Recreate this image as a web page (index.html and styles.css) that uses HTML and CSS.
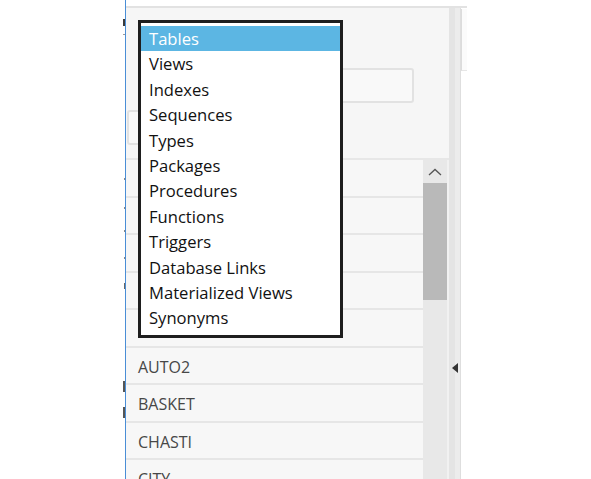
FILE: index.html
```html
<!DOCTYPE html>
<html>
<head>
<meta charset="utf-8">
<link rel="stylesheet" href="styles.css">
</head>
<body>
<div class="screen">
  <div class="gutter">
    <span class="tick t1"></span>
    <span class="tick t2"></span>
    <span class="tick t3"></span>
    <span class="tick t4"></span>
    <span class="tick t5"></span>
    <span class="tick t6"></span>
    <span class="tick t7"></span>
    <span class="tick t8"></span>
    <span class="tick t9"></span>
  </div>
  <div class="blueline"></div>
  <div class="main">
    <div class="topwhite"></div>
    <div class="body">
      <div class="panel">
        <div class="header">
          <div class="search"></div>
          <div class="btnbox"></div>
        </div>
        <div class="listarea">
          <div class="rows">
            <div class="row"></div>
            <div class="row"></div>
            <div class="row"></div>
            <div class="row"></div>
            <div class="row"></div>
            <div class="row">AUTO2</div>
            <div class="row">BASKET</div>
            <div class="row">CHASTI</div>
            <div class="row">CITY</div>
          </div>
          <div class="scrollbar">
            <div class="arrow">
              <svg width="14" height="8" viewBox="0 0 14 8"><path d="M1 7 L7 1.5 L13 7" fill="none" stroke="#555" stroke-width="1.3"/></svg>
            </div>
            <div class="thumb"></div>
          </div>
          <div class="edge"></div>
        </div>
        <ul class="dropdown">
          <li class="sel">Tables</li>
          <li>Views</li>
          <li>Indexes</li>
          <li>Sequences</li>
          <li>Types</li>
          <li>Packages</li>
          <li>Procedures</li>
          <li>Functions</li>
          <li>Triggers</li>
          <li>Database Links</li>
          <li>Materialized Views</li>
          <li>Synonyms</li>
        </ul>
      </div>
      <div class="strip">
        <span class="collapse"></span>
      </div>
      <div class="side">
        <div class="sidebox"></div>
      </div>
    </div>
  </div>
</div>
</body>
</html>
```
FILE: styles.css
```css
html, body {
  margin: 0;
  padding: 0;
  background: #ffffff;
}
body {
  width: 591px;
  height: 479px;
  overflow: hidden;
  font-family: "Open Sans", "Noto Sans", sans-serif;
}
.screen {
  display: flex;
  height: 479px;
}
.gutter {
  flex: none;
  width: 125px;
  display: flex;
  flex-direction: column;
  align-items: flex-end;
}
.tick {
  flex: none;
  display: block;
  width: 2px;
  background: #3a3a3a;
}
.t1 { margin-top: 19px; height: 7px; }
.t2 { margin-top: 8px; height: 1px; background: #9a9a9a; }
.t3 { margin-top: 143px; height: 2px; width: 1px; background: #888; }
.t4 { margin-top: 27px; height: 2px; width: 1px; background: #888; }
.t5 { margin-top: 21px; height: 2px; width: 1px; background: #888; }
.t6 { margin-top: 25px; height: 2px; width: 1px; background: #888; }
.t7 { margin-top: 24px; height: 6px; width: 1px; background: #666; }
.t8 { margin-top: 92px; height: 11px; background: #555; }
.t9 { margin-top: 15px; height: 11px; background: #555; }
.blueline {
  flex: none;
  width: 1px;
  background: #4a8ed6;
}
.main {
  flex: none;
  width: 341px;
  display: flex;
  flex-direction: column;
  overflow: hidden;
}
.topwhite {
  flex: none;
  height: 6px;
  border-bottom: 2px solid #e2e2e2;
}
.body {
  flex: 1;
  min-height: 0;
  display: flex;
}
.panel {
  flex: none;
  position: relative;
  width: 323px;
  background: #f6f6f6;
  display: flex;
  flex-direction: column;
}
.header {
  flex: none;
  height: 150px;
  border-bottom: 2px solid #e7e7e7;
  display: flex;
  flex-direction: column;
}
.search {
  flex: none;
  margin-top: 60px;
  margin-left: 12px;
  width: 272px;
  height: 31px;
  border: 2px solid #e2e2e2;
  border-radius: 3px;
  background: #f9f9f9;
}
.btnbox {
  flex: none;
  margin-top: 7px;
  margin-left: 1px;
  width: 150px;
  height: 31px;
  border: 2px solid #e2e2e2;
  border-radius: 3px;
  background: #f9f9f9;
}
.listarea {
  flex: 1;
  min-height: 0;
  display: flex;
  overflow: hidden;
}
.rows {
  flex: none;
  width: 297px;
  display: flex;
  flex-direction: column;
}
.row {
  flex: none;
  height: 37.5px;
  box-sizing: border-box;
  border-bottom: 2px solid #e6e6e6;
  background: #f7f7f7;
  padding-left: 12px;
  padding-top: 3px;
  display: flex;
  align-items: center;
  font-size: 16px;
  color: #474747;
}
.scrollbar {
  flex: none;
  width: 24px;
  background: #e8e8e8;
  display: flex;
  flex-direction: column;
}
.arrow {
  flex: none;
  height: 23px;
  display: flex;
  align-items: center;
  justify-content: center;
}
.thumb {
  flex: none;
  height: 117px;
  background: #b9b9b9;
}
.edge {
  flex: 1;
  background: #f1f1f1;
}
.strip {
  flex: none;
  width: 12px;
  background: linear-gradient(to right, #e4e4e4 0, #e4e4e4 6px, #ececec 6px, #ececec 11px, #dedede 11px);
  display: flex;
  flex-direction: column;
  align-items: center;
}
.collapse {
  flex: none;
  margin-top: 355px;
  width: 0;
  height: 0;
  border-top: 5px solid transparent;
  border-bottom: 5px solid transparent;
  border-right: 6px solid #333;
}
.side {
  flex: none;
  width: 6px;
}
.sidebox {
  margin-top: 1px;
  height: 61px;
  border-left: 1px solid #dcdcdc;
  border-bottom: 1px solid #e6e6e6;
  background: #fbfbfb;
}
.dropdown {
  position: absolute;
  left: 12px;
  top: 12px;
  width: 199px;
  height: 309px;
  margin: 0;
  padding: 3px 0 0 0;
  list-style: none;
  border: 3px solid #1e1e1e;
  background: #ffffff;
}
.dropdown li {
  height: 25.4px;
  line-height: 25px;
  padding-left: 8px;
  font-size: 16.6px;
  color: #111;
  white-space: nowrap;
}
.dropdown li.sel {
  background: #5cb6e3;
  color: #ffffff;
}
```
